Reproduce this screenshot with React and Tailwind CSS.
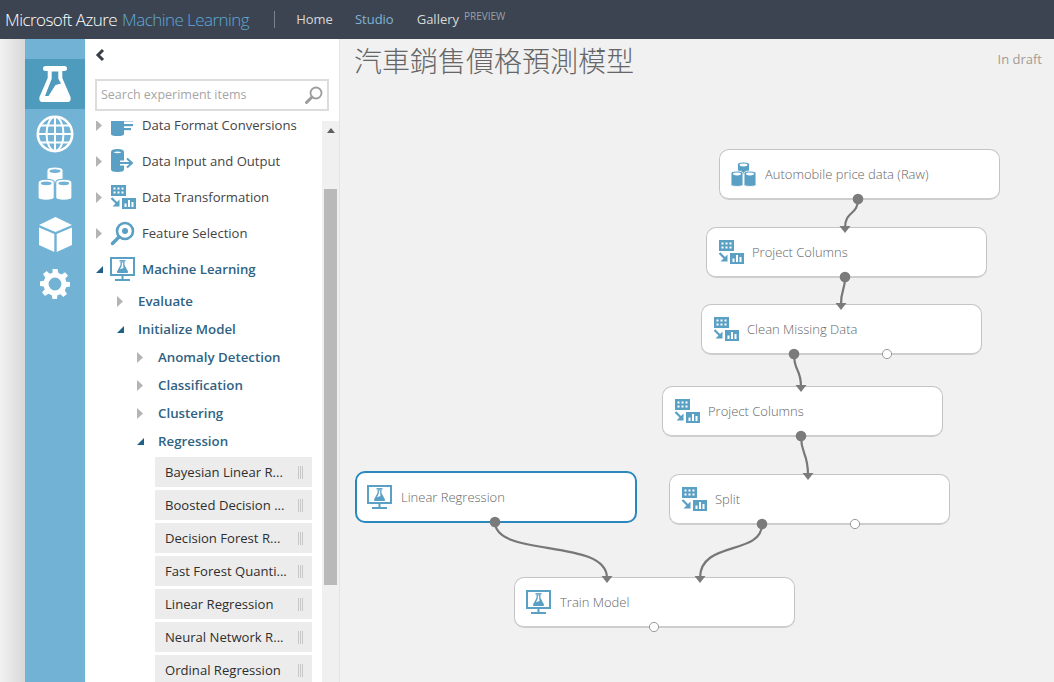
import React from "react";

const BLUE = "#5a9fc4";

const TransformIcon = ({ className = "" }) => (
  <svg width="26" height="24" viewBox="0 0 26 24" className={className}>
    <rect x="1" y="0" width="15" height="11" fill={BLUE} />
    {[3.5, 7.5, 11.5].map((x) => [2.5, 6.5].map((y) => <rect key={x + "-" + y} x={x} y={y} width="2" height="2" fill="#fff" />))}
    <path d="M1.5 13 L8 19.5" stroke={BLUE} strokeWidth="2.2" fill="none" />
    <path d="M9.5 14.5 V21.5 H2.5 Z" fill={BLUE} />
    <rect x="12" y="13" width="14" height="11" fill={BLUE} />
    <rect x="14.5" y="18.5" width="2" height="3.5" fill="#fff" />
    <rect x="18" y="15" width="2" height="7" fill="#fff" />
    <rect x="21.5" y="17" width="2" height="5" fill="#fff" />
  </svg>
);

const MonitorIcon = ({ className = "" }) => (
  <svg width="25" height="25" viewBox="0 0 25 25" className={className}>
    <rect x="1" y="1" width="23" height="17" fill="none" stroke={BLUE} strokeWidth="2" />
    <path d="M9.5 3.8 H15.5" stroke={BLUE} strokeWidth="1.4" />
    <path fillRule="evenodd" d="M10.5 4.5 H14.5 V8 L18 14.5 Q18.2 16 17 16 H8 Q6.8 16 7 14.5 L10.5 8 Z M11.8 5.5 V8.5 L10 12.3 L13.5 11 L13.2 8.5 V5.5 Z" fill={BLUE} />
    <path d="M12.5 18 V22" stroke={BLUE} strokeWidth="2" />
    <path d="M5 23 H20" stroke={BLUE} strokeWidth="2" />
  </svg>
);

const Cyl = ({ x, y, w, h, fill, top, halo }) => (
  <g>
    <path
      d={`M${x} ${y + 2.5} V${y + h - 2} Q${x} ${y + h} ${x + w / 2} ${y + h} Q${x + w} ${y + h} ${x + w} ${y + h - 2} V${y + 2.5} Q${x + w} ${y} ${x + w / 2} ${y} Q${x} ${y} ${x} ${y + 2.5} Z`}
      fill={fill}
      stroke={halo}
      strokeWidth="0.9"
    />
    <ellipse cx={x + w / 2} cy={y + 3} rx={w / 2 - 2} ry="1.4" fill={top} />
  </g>
);

const CylindersIcon = ({ fill = BLUE, top = "#fff", size = 25 }) => (
  <svg width={size} height={size} viewBox="0 0 25 25">
    <Cyl x={6.5} y={0} w={12} h={13} fill={fill} top={top} halo={top} />
    <Cyl x={0} y={9} w={12} h={15.5} fill={fill} top={top} halo={top} />
    <Cyl x={13} y={9} w={12} h={15.5} fill={fill} top={top} halo={top} />
  </svg>
);

const FlaskNav = () => (
  <svg width="32" height="36" viewBox="0 0 32 36">
    <path d="M6.5 2.5 H25.5" stroke="#fff" strokeWidth="5" strokeLinecap="round" />
    <path
      fillRule="evenodd"
      d="M8.7 4 H23.3 V12 L31.5 31 Q32.5 36 28 36 H4 Q-0.5 36 0.5 31 L8.7 12 Z M12.7 5.5 V12.7 L6 30 H9.5 L16.5 19 L22 17.5 L19.3 12.7 V5.5 Z"
      fill="#fff"
    />
  </svg>
);

const GlobeNav = () => (
  <svg width="38" height="38" viewBox="0 0 38 38" fill="none" stroke="#fff" strokeWidth="2">
    <circle cx="19" cy="19" r="17.2" strokeWidth="2.6" />
    <ellipse cx="19" cy="19" rx="8.5" ry="17" />
    <path d="M19 2 V36 M2 19 H36 M5 10.5 H33 M5 27.5 H33" />
  </svg>
);

const CubeNav = () => (
  <svg width="33" height="35" viewBox="0 0 33 35" fill="#fff">
    <path d="M16.5 0 L33 8 L16.5 15 L0 8 Z" />
    <path d="M0 10.5 L15.3 17 V35 L0 28 Z" />
    <path d="M33 10.5 L17.7 17 V35 L33 28 Z" />
  </svg>
);

const GearNav = () => (
  <svg width="30" height="30" viewBox="0 0 30 30">
    <path fillRule="evenodd" fill="#fff" d="M12.5 0 H17.5 L18.4 4 L21.6 5.4 L25.1 3.2 L28 6.8 L25.3 9.6 L26.2 12.7 L30 13 V17.5 L26.1 18.3 L24.8 21.5 L27 25 L23.3 28 L20.4 25.3 L17.4 26.3 L17 30 H12.5 L11.7 26.2 L8.5 24.8 L5 27 L2 23.3 L4.7 20.4 L3.7 17.4 L0 17 V12.5 L3.8 11.7 L5.2 8.5 L3 5 L6.7 2 L9.6 4.7 L12.6 3.7 Z M15 8.6 A6.4 6.4 0 1 0 15 21.4 A6.4 6.4 0 1 0 15 8.6 Z" />
  </svg>
);

const DataFormatIcon = () => (
  <svg width="24" height="24" viewBox="0 0 24 24">
    <path d="M1 0 H14 V21 Q14 23 7.5 23 Q1 23 1 21 Z" fill={BLUE} />
    <rect x="12" y="6" width="11" height="2.4" fill={BLUE} />
    <rect x="14" y="11" width="9" height="2.2" fill={BLUE} />
    <rect x="14" y="15" width="7" height="2.2" fill={BLUE} />
  </svg>
);

const DataIOIcon = () => (
  <svg width="24" height="24" viewBox="0 0 24 24">
    <path fillRule="evenodd" d="M1 3 Q1 0 7.5 0 Q14 0 14 3 V20.5 Q14 23 7.5 23 Q1 23 1 20.5 Z M3.5 3.4 Q7.5 5 11.5 3.4 Q7.5 1.8 3.5 3.4 Z" fill={BLUE} />
    <path d="M10 14 H22" stroke="#fff" strokeWidth="5" />
    <path d="M10 14 H21" stroke={BLUE} strokeWidth="2" />
    <path d="M17 9.5 L22 14 L17 18.5" stroke={BLUE} strokeWidth="2" fill="none" />
  </svg>
);

const SearchBigIcon = () => (
  <svg width="25" height="25" viewBox="0 0 25 25" fill="none" stroke={BLUE}>
    <circle cx="15" cy="10" r="8" strokeWidth="2.6" />
    <circle cx="15" cy="10" r="3" fill={BLUE} strokeWidth="0" />
    <path d="M9 16 L2.5 22.5" strokeWidth="3.4" strokeLinecap="round" />
  </svg>
);

const Closed = ({ className }) => (
  <svg width="7" height="11" viewBox="0 0 7 11" className={className}>
    <path d="M0 0 L6 5.5 L0 11 Z" fill="#b4b4b4" />
  </svg>
);
const Open = ({ className }) => (
  <svg width="7" height="7" viewBox="0 0 7 7" className={className}>
    <path d="M7 0 V7 H0 Z" fill="#1f6186" />
  </svg>
);

const TopRow = ({ icon, label, open }) => (
  <div className="h-[36px] flex items-center pl-[11px]">
    <div className="w-[14px] flex items-center">{open ? <Open /> : <Closed />}</div>
    <div className="w-[32px] flex items-center">{icon}</div>
    <span className={open ? "pt-[2px] text-[13.2px] font-semibold text-[#2f6283]" : "pt-[2px] text-[13.1px] text-[#444]"}>{label}</span>
  </div>
);

const SubRow = ({ label, open, indent }) => (
  <div className={`h-[28px] flex items-center ${indent}`}>
    <div className="w-[21px] flex items-center">{open ? <Open /> : <Closed />}</div>
    <span className="pt-[2px] text-[13.3px] font-semibold text-[#2f6283]">{label}</span>
  </div>
);

const Item = ({ label }) => (
  <div className="w-[157px] h-[30px] bg-[#ececec] pl-[10px] pr-[9px] flex items-center justify-between">
    <span className="pt-[2px] text-[13.1px] text-[#2e2e2e] whitespace-nowrap">{label}</span>
    <span className="flex gap-[1px] h-[13px]">
      <span className="w-[1px] bg-[#c8c8c8]" />
      <span className="w-[1px] bg-[#c8c8c8]" />
      <span className="w-[1px] bg-[#c8c8c8]" />
    </span>
  </div>
);

const Node = ({ pos, icon, label, selected }) => (
  <div
    className={`absolute flex items-center bg-white rounded-[10px] ${pos} ${
      selected ? "w-[282px] h-[52px] border-2 border-[#2b88bd]" : "w-[281px] h-[51px] border border-[#c4c4c4] border-b-2 border-b-[#cdcdcd]"
    }`}
  >
    <div className={`w-[45px] shrink-0 flex items-center ${selected ? "-ml-px" : ""}`}>
      <div className="ml-[11px]">{icon}</div>
    </div>
    <span className="pt-[2px] text-[13px] font-light text-[#666] whitespace-nowrap">{label}</span>
  </div>
);

const Wires = () => (
  <svg className="absolute inset-0" width="714" height="643" viewBox="340 39 714 643" fill="none">
    <g stroke="#777" strokeWidth="2.2">
      <path d="M858 199 C858 216 845 210 845 228" />
      <path d="M845 277 C845 292 841 288 841 305" />
      <path d="M794 354 C794 372 801 368 801 387" />
      <path d="M801 436 C801 455 808 452 808 475" />
      <path d="M495 522 C495 558 607 538 607 578" />
      <path d="M762 524 C762 556 700 540 700 578" />
    </g>
  </svg>
);

const WireCaps = () => (
  <svg className="absolute inset-0" width="714" height="643" viewBox="340 39 714 643">
    <g fill="#7b7b7b">
      {[[845, 227], [841, 304], [801, 386], [808, 474], [607, 577], [700, 577]].map(([x, y]) => (
        <path key={x + "-" + y} d={`M${x - 5.5} ${y - 1} H${x + 5.5} L${x} ${y + 6} Z`} />
      ))}
      {[[858, 199], [845, 277], [794, 354], [801, 436], [762, 524], [495, 522]].map(([x, y]) => (
        <circle key={x + "-" + y} cx={x} cy={y} r="5.3" />
      ))}
    </g>
    <g fill="#fff" stroke="#9a9a9a">
      {[[887, 354], [855, 524], [654, 627]].map(([x, y]) => (
        <circle key={x + "-" + y} cx={x} cy={y} r="4.6" />
      ))}
    </g>
  </svg>
);

export default function App() {
  return (
    <div className="w-[1054px] h-[682px] overflow-hidden flex flex-col bg-[#f1f1f1] font-['Open_Sans','Noto_Sans_CJK_TC',sans-serif]">
      <header className="h-[39px] shrink-0 bg-[#3c4451] flex items-center pl-[5px]">
        <span className="text-[17px] font-light text-white whitespace-nowrap tracking-[-0.55px]">Microsoft Azure</span>
        <span className="text-[17px] font-light text-[#5fa8d8] whitespace-nowrap ml-[5px] tracking-[-0.55px]">Machine Learning</span>
        <span className="w-px h-[17px] bg-[#7c828c] ml-[25px]" />
        <span className="text-[13px] font-medium text-[#d8d8d8] ml-[21px]">Home</span>
        <span className="text-[13px] font-medium text-[#7fb4d8] ml-[22px]">Studio</span>
        <span className="text-[13px] font-medium text-[#d8d8d8] ml-[23px]">Gallery</span>
        <span className="text-[10px] text-[#9aa0a8] ml-[5px] mb-[6px]">PREVIEW</span>
      </header>
      <div className="flex-1 flex min-h-0">
        <div className="w-[25px] bg-gradient-to-r from-[#f2f2f2] to-[#d8d8d8]" />
        <nav className="w-[60px] bg-[#71b2d5] pt-[20px] flex flex-col">
          <div className="h-[50px] bg-[#4f9bbe] flex items-center justify-center"><FlaskNav /></div>
          <div className="h-[50px] flex items-center justify-center"><GlobeNav /></div>
          <div className="h-[50px] flex items-center justify-center"><CylindersIcon fill="#fff" top="#71b2d5" size={34} /></div>
          <div className="h-[50px] flex items-center justify-center"><CubeNav /></div>
          <div className="h-[50px] flex items-center justify-center"><GearNav /></div>
        </nav>
        <aside className="w-[255px] bg-white border-r border-[#e4e4e4] flex flex-col min-h-0">
          <div className="h-[40px] shrink-0 pl-[10px] pt-[9px]">
            <svg width="10" height="14" viewBox="0 0 10 14" fill="none" stroke="#3a3f47" strokeWidth="3">
              <path d="M8 2 L3 7 L8 12" />
            </svg>
          </div>
          <div className="mx-[10px] w-[234px] h-[32px] shrink-0 border-2 border-[#dcdcdc] flex items-center justify-between pl-[4px] pr-[3px]">
            <span className="text-[12.5px] text-[#a6a6a6] whitespace-nowrap">Search experiment items</span>
            <svg width="20" height="20" viewBox="0 0 20 20" fill="none" stroke="#9c9c9c">
              <circle cx="12" cy="8" r="5.5" strokeWidth="1.8" />
              <path d="M8 12 L2.5 17.5" strokeWidth="3" strokeLinecap="round" />
            </svg>
          </div>
          <div className="mt-[10px] flex-1 min-h-0 flex">
            <div className="w-[237px] overflow-hidden">
              <div className="-mt-[14px] flex flex-col">
                <TopRow icon={<DataFormatIcon />} label="Data Format Conversions" />
                <TopRow icon={<DataIOIcon />} label="Data Input and Output" />
                <TopRow icon={<TransformIcon />} label="Data Transformation" />
                <TopRow icon={<SearchBigIcon />} label="Feature Selection" />
                <TopRow icon={<MonitorIcon />} label="Machine Learning" open />
                <SubRow label="Evaluate" indent="pl-[32px]" />
                <SubRow label="Initialize Model" open indent="pl-[32px]" />
                <SubRow label="Anomaly Detection" indent="pl-[52px]" />
                <SubRow label="Classification" indent="pl-[52px]" />
                <SubRow label="Clustering" indent="pl-[52px]" />
                <SubRow label="Regression" open indent="pl-[52px]" />
                <div className="pl-[70px] pt-[2px] flex flex-col gap-[3px]">
                  <Item label="Bayesian Linear R..." />
                  <Item label="Boosted Decision ..." />
                  <Item label="Decision Forest R..." />
                  <Item label="Fast Forest Quanti..." />
                  <Item label="Linear Regression" />
                  <Item label="Neural Network R..." />
                  <Item label="Ordinal Regression" />
                </div>
              </div>
            </div>
            <div className="w-[17px] bg-[#f0f0f0] flex flex-col items-center">
              <svg width="8" height="5" viewBox="0 0 8 5" className="mt-[7px]">
                <path d="M4 0 L8 5 H0 Z" fill="#606060" />
              </svg>
              <div className="mt-[56px] w-[13px] h-[396px] bg-[#b9b9b9]" />
            </div>
          </div>
        </aside>
        <main className="relative flex-1 min-w-0">
          <h1 className="absolute left-[14px] top-[3px] text-[28px] leading-[38px] font-light text-[#666] whitespace-nowrap">汽車銷售價格預測模型</h1>
          <span className="absolute right-[12px] top-[11px] text-[13px] text-[#a39c92]">In draft</span>
          <Wires />
          <Node pos="left-[379px] top-[110px]" icon={<CylindersIcon />} label="Automobile price data (Raw)" />
          <Node pos="left-[366px] top-[188px]" icon={<TransformIcon />} label="Project Columns" />
          <Node pos="left-[361px] top-[265px]" icon={<TransformIcon />} label="Clean Missing Data" />
          <Node pos="left-[322px] top-[347px]" icon={<TransformIcon />} label="Project Columns" />
          <Node pos="left-[329px] top-[435px]" icon={<TransformIcon />} label="Split" />
          <Node pos="left-[15px] top-[432px]" icon={<MonitorIcon />} label="Linear Regression" selected />
          <Node pos="left-[174px] top-[538px]" icon={<MonitorIcon />} label="Train Model" />
          <WireCaps />
        </main>
      </div>
    </div>
  );
}
